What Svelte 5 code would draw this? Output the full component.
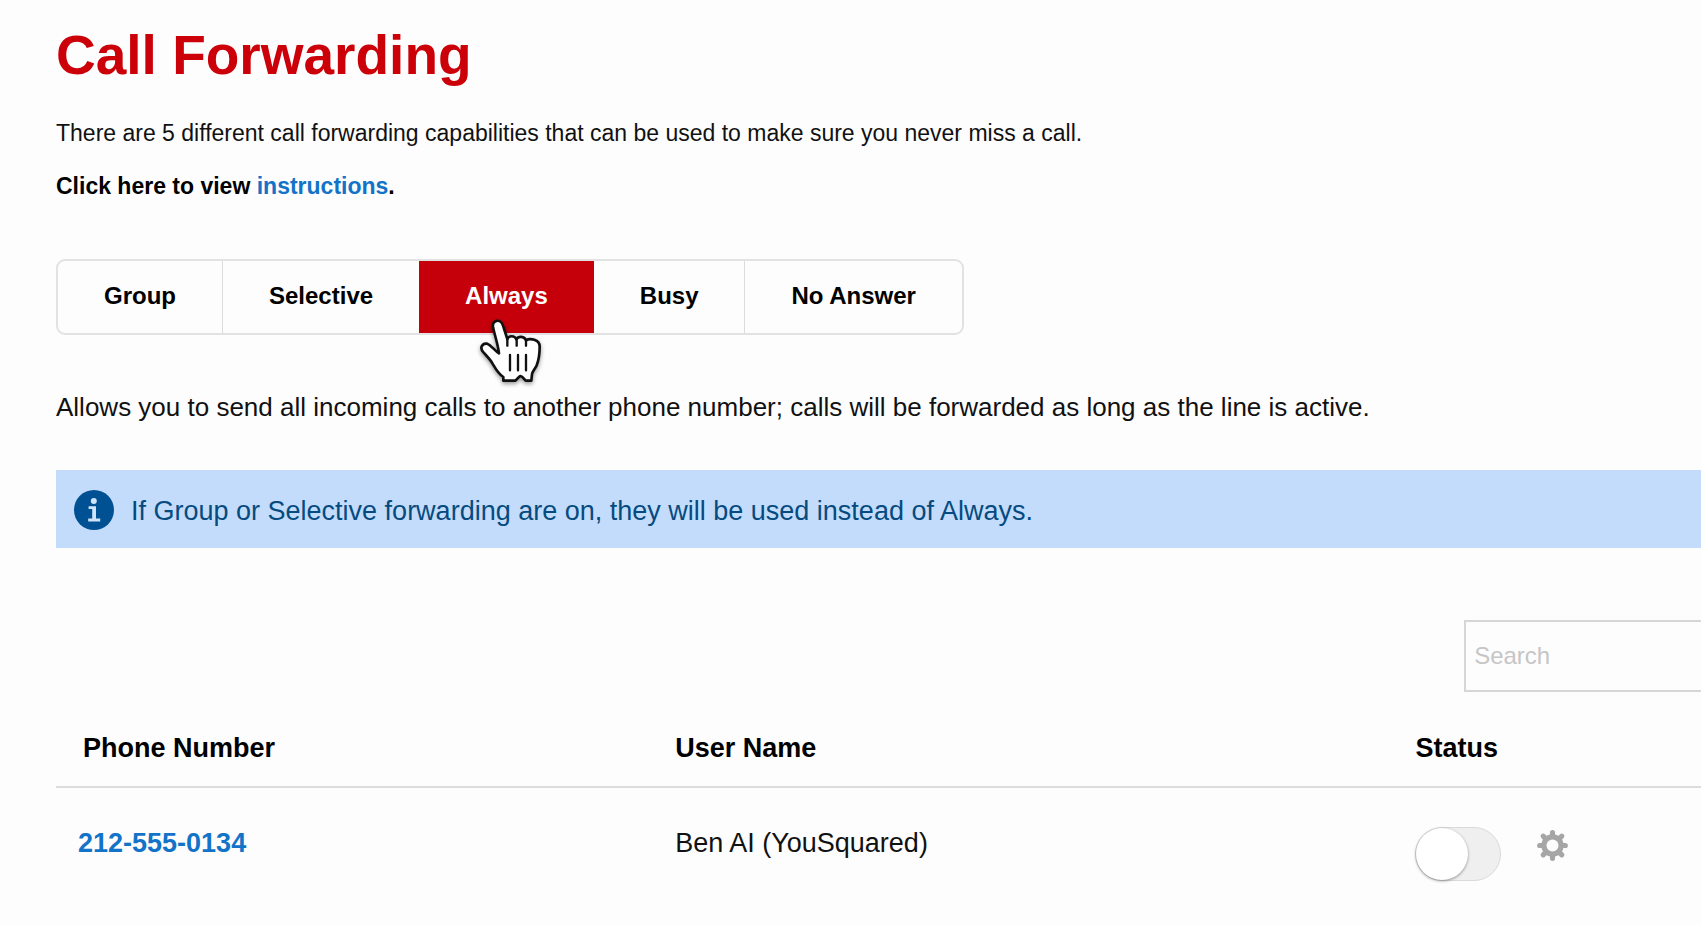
<script>
  const tabs = ['Group', 'Selective', 'Always', 'Busy', 'No Answer'];
  let selected = $state('Always');
  let query = $state('');
  let lines = $state([{ phone: '212-555-0134', user: 'Ben AI (YouSquared)', on: false }]);
  const shown = $derived(
    lines.filter((l) => (l.phone + ' ' + l.user).toLowerCase().includes(query.toLowerCase()))
  );
</script>

<main>
  <h1>Call Forwarding</h1>
  <p class="intro">
    There are 5 different call forwarding capabilities that can be used to make sure you never miss a call.
  </p>
  <p class="help">Click here to view <a href="#instructions">instructions</a>.</p>

  <div class="tabs" role="tablist">
    {#each tabs as tab}
      <button
        type="button"
        role="tab"
        aria-selected={selected === tab}
        class:active={selected === tab}
        onclick={() => (selected = tab)}
      >
        {tab}
        {#if tab === 'Always'}
          <svg class="pointer" viewBox="0 0 240 240" aria-hidden="true">
            <path
              d="M66 48 C62 26 90 22 96 44 L109 84 C113 73 131 73 136 85 C142 74 160 75 165 88 C176 81 207 84 206 108 C206 132 202 150 197 163 C192 174 184 181 183 190 L181 209 H164 C160 205 155 196 148 195 C142 197 137 207 132 209 H97 V198 C86 191 74 174 66 160 C58 145 47 135 38 125 C24 111 34 96 48 98 C62 103 70 119 84 127 C81 100 71 73 66 48 Z"
              fill="#fff"
              stroke="#111"
              stroke-width="8"
              stroke-linejoin="round"
            />
            <path
              d="M109 84 V104 M137 86 V104 M165 88 V104 M117 132 V178 M141 132 V178 M165 132 V178"
              fill="none"
              stroke="#111"
              stroke-width="7"
              stroke-linecap="round"
            />
          </svg>
        {/if}
      </button>
    {/each}
  </div>

  <p class="about">
    Allows you to send all incoming calls to another phone number; calls will be forwarded as long as the line is active.
  </p>

  <div class="notice">
    <svg viewBox="0 0 40 40" aria-hidden="true">
      <circle cx="20" cy="20" r="20" fill="#005193" />
      <circle cx="19.8" cy="11" r="3" fill="#cfe3fb" />
      <path d="M14.6 16.2 H22 V28.6 H26.2 V31.4 H14.2 V28.6 H18.2 V19 H14.6 Z" fill="#cfe3fb" />
    </svg>
    <span>If Group or Selective forwarding are on, they will be used instead of Always.</span>
  </div>

  <input class="search" type="search" placeholder="Search" aria-label="Search" bind:value={query} />

  <table>
    <thead>
      <tr>
        <th class="phone" scope="col">Phone Number</th>
        <th class="user" scope="col">User Name</th>
        <th scope="col">Status</th>
      </tr>
    </thead>
    <tbody>
      {#each shown as line (line.phone)}
        <tr>
          <td><a href="#line">{line.phone}</a></td>
          <td>{line.user}</td>
          <td>
            <div class="controls">
              <input
                class="toggle"
                type="checkbox"
                role="switch"
                aria-label="Forwarding status"
                bind:checked={line.on}
              />
              <button class="gear" type="button" aria-label="Settings">
                <svg viewBox="-15 -15 30 30" aria-hidden="true">
                  <g stroke="#a6a6a6" stroke-width="5" stroke-linecap="round">
                    <path d="M0 -12.4 V12.4 M-12.4 0 H12.4 M-9 -9 L9 9 M-9 9 L9 -9" />
                  </g>
                  <circle r="10.8" fill="#a6a6a6" />
                  <circle r="5.8" fill="#fdfdfd" />
                </svg>
              </button>
            </div>
          </td>
        </tr>
      {/each}
    </tbody>
  </table>
</main>

<style>
  :global(body) {
    margin: 0;
    background: #fdfdfd;
  }

  main {
    display: flex;
    flex-direction: column;
    padding: 23px 0 24px 56px;
    overflow-x: hidden;
    color: #111;
    font: 26px/32px 'Liberation Sans', Arial, sans-serif;
  }

  h1,
  p {
    margin: 0;
  }

  h1 {
    color: #cb0009;
    font-size: 55px;
    line-height: 64px;
  }

  a {
    color: #1273c8;
    font-weight: 700;
    text-decoration: none;
  }

  button {
    border: 0;
    background: none;
    color: inherit;
    font: inherit;
    cursor: pointer;
  }

  .intro {
    margin-top: 30px;
    font-size: 23px;
  }

  .help {
    margin-top: 21px;
    color: #000;
    font-size: 23px;
    font-weight: 700;
  }

  .tabs {
    display: flex;
    align-self: flex-start;
    margin-top: 57px;
    border: 2px solid #e2e2e2;
    border-radius: 9px;
  }

  .tabs button {
    position: relative;
    padding: 19px 46px 21px;
    color: #000;
    font-size: 24px;
    font-weight: 700;
    white-space: nowrap;
  }

  .tabs button + button:not(.active) {
    border-left: 1px solid #dcdcdc;
  }

  .tabs button.active + button {
    border-left: 0;
  }

  .tabs button.active {
    background: #c5000a;
    color: #fff;
  }

  .pointer {
    position: absolute;
    top: 50px;
    left: 52px;
    z-index: 1;
    width: 80px;
    height: 80px;
    filter: drop-shadow(0 2px 2px rgb(0 0 0 / 40%));
    pointer-events: none;
  }

  .about {
    margin-top: 56px;
  }

  .notice {
    display: flex;
    align-items: center;
    gap: 17px;
    margin-top: 47px;
    padding: 20px 18px 18px;
    background: #c4dcfb;
    color: #064b80;
    font-size: 27px;
  }

  .notice span {
    padding-top: 2px;
  }

  .notice svg {
    flex: none;
    width: 40px;
    height: 40px;
  }

  .search {
    box-sizing: border-box;
    align-self: flex-end;
    width: 14.4%;
    height: 72px;
    margin-top: 72px;
    padding: 0 8px;
    border: 2px solid #d6d6d6;
    border-right: 0;
    border-radius: 0;
    background: #fdfdfd;
    color: #111;
    font: inherit;
    font-size: 24px;
    appearance: none;
  }

  .search::placeholder {
    color: #c6c6c6;
    opacity: 1;
  }

  table {
    width: 100%;
    border-collapse: separate;
    border-spacing: 0;
    table-layout: fixed;
  }

  th,
  td {
    padding: 40px 0 22px;
    text-align: left;
    vertical-align: top;
  }

  th {
    border-bottom: 2px solid #dcdcdc;
    color: #000;
    font-size: 27px;
  }

  th:first-child {
    padding-left: 27px;
  }

  td {
    padding-top: 39px;
    font-size: 27px;
  }

  td:first-child {
    padding-left: 22px;
  }

  .phone {
    width: 36%;
  }

  .user {
    width: 45%;
  }

  .controls {
    display: flex;
    align-items: flex-start;
    gap: 36px;
  }

  .toggle {
    box-sizing: border-box;
    width: 86px;
    height: 54px;
    margin: 0;
    border: 1px solid #dadada;
    border-radius: 27px;
    background: #efefef;
    appearance: none;
    cursor: pointer;
  }

  .toggle::before {
    display: block;
    width: 52px;
    height: 52px;
    border-radius: 50%;
    background: #fff;
    box-shadow: 0 1px 3px rgb(0 0 0 / 40%);
    content: '';
  }

  .toggle:checked {
    background: #7ac77d;
  }

  .toggle:checked::before {
    margin-left: auto;
  }

  .gear {
    display: flex;
    padding: 3px 0;
  }

  .gear svg {
    width: 31px;
    height: 31px;
  }
</style>
